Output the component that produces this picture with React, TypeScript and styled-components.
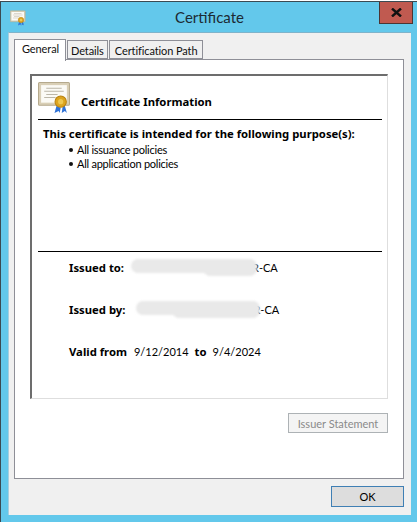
import React from "react";
import styled, { createGlobalStyle } from "styled-components";

const GlobalStyle = createGlobalStyle`
  html, body {
    margin: 0;
    padding: 0;
    background: #ffffff;
  }
  body {
    font-family: Lato, "Noto Sans", sans-serif;
    font-size: 11px;
    color: #000;
  }
`;

function CertIcon({ size }: { size: number }) {
  return (
    <svg width={size} height={size} viewBox="0 0 32 32">
      <rect x="0.5" y="1.5" width="30" height="22" rx="1" fill="#d9cfb6" stroke="#b5a98c" />
      <rect x="3" y="4" width="25" height="17" fill="#fbfaf5" />
      <path d="M8 7h15M6 10h19M8 13h11M6 16h11" stroke="#bcb7a8" strokeWidth="1" />
      <path d="M18 24l-2 7 4-2 1 2 1-5zM24 24l-1 7 3-2 2 2-2-7z" fill="#2f72d6" />
      <circle cx="22" cy="20" r="5.5" fill="#dca41e" stroke="#b9820f" />
      <circle cx="22" cy="20" r="2.5" fill="#efc850" />
    </svg>
  );
}

function App() {
  return (
    <Page>
      <GlobalStyle />
      <Window>
        <TitleBar>
          <TitleIcon>
            <CertIcon size={16} />
          </TitleIcon>
          <Title>Certificate</Title>
          <CloseButton aria-label="Close">
            <svg width="11" height="9" viewBox="0 0 11 9">
              <path d="M1 0.5l9 8M10 0.5l-9 8" stroke="#111" strokeWidth="2.4" />
            </svg>
          </CloseButton>
        </TitleBar>
        <Client>
          <Tabs>
            <Tab $active $left={7} $right={6}>General</Tab>
            <Tab $left={3} $right={3}>Details</Tab>
            <Tab $left={5} $right={5}>Certification Path</Tab>
          </Tabs>
          <TabPanel>
            <CertBox>
              <InfoHeader>
                <CertIcon size={33} />
                <InfoTitle>Certificate Information</InfoTitle>
              </InfoHeader>
              <Purpose>
                <PurposeTitle>This certificate is intended for the following purpose(s):</PurposeTitle>
                <PolicyList>
                  <li>All issuance policies</li>
                  <li>All application policies</li>
                </PolicyList>
              </Purpose>
              <Details>
                <DetailRow>
                  <Label>Issued to:</Label>
                  <Value>
                    <Blur $offset={1} $width={126} $gap={5} $lobeLeft={72} />
                    R-CA
                  </Value>
                </DetailRow>
                <DetailRow>
                  <Label>Issued by:</Label>
                  <Value>
                    <Blur $offset={5} $width={124} $gap={7} $lobeLeft={36} />
                    R-CA
                  </Value>
                </DetailRow>
                <DetailRow>
                  <Label>Valid from</Label>
                  <Dates>
                    <span>9/12/2014</span>
                    <Label>to</Label>
                    <span>9/4/2024</span>
                  </Dates>
                </DetailRow>
              </Details>
            </CertBox>
            <PanelActions>
              <IssuerButton disabled>Issuer Statement</IssuerButton>
            </PanelActions>
          </TabPanel>
          <Footer>
            <OkButton>OK</OkButton>
          </Footer>
        </Client>
      </Window>
    </Page>
  );
}
export default App;

const Page = styled.div`
  width: 417px;
  height: 522px;
  padding-top: 1px;
  box-sizing: border-box;
  overflow: hidden;
`;

const Window = styled.div`
  width: 417px;
  height: 521px;
  box-sizing: border-box;
  background: #63c8eb;
  border-top: 1px solid #3b4a52;
  border-left: 1px solid #3b4a52;
  padding: 0 6px 7px 7px;
  display: flex;
  flex-direction: column;
`;

const TitleBar = styled.div`
  height: 30px;
  position: relative;
  display: flex;
  align-items: center;
  justify-content: center;
  flex: none;
`;

const TitleIcon = styled.div`
  position: absolute;
  left: 2px;
  top: 8px;
  display: flex;
`;

const Title = styled.div`
  font-size: 15px;
  color: #1c2a33;
`;

const CloseButton = styled.button`
  position: absolute;
  right: -2px;
  top: 0;
  width: 34px;
  height: 22px;
  box-sizing: border-box;
  padding: 0;
  background: #c05a50;
  border: 1px solid #4c3533;
  border-top: none;
  display: flex;
  align-items: center;
  justify-content: center;
`;

const Client = styled.div`
  flex: 1;
  background: #f0f0f0;
  border-top: 1px solid #7fb3ca;
  border-left: 1px solid #a6cfe0;
  padding: 6px 7px 0 5px;
  display: flex;
  flex-direction: column;
  min-height: 0;
`;

const Tabs = styled.div`
  display: flex;
  align-items: flex-end;
  height: 22px;
  flex: none;
  position: relative;
  z-index: 1;
  margin-bottom: -2px;
`;

const Tab = styled.div<{ $active?: boolean; $left: number; $right: number }>`
  box-sizing: border-box;
  height: ${(p) => (p.$active ? "22px" : "19px")};
  margin-bottom: ${(p) => (p.$active ? "0" : "2px")};
  padding: ${(p) => (p.$active ? 0 : 1)}px ${(p) => p.$right}px 0 ${(p) => p.$left}px;
  background: ${(p) => (p.$active ? "#ffffff" : "#f0f0f0")};
  border: 1px solid #8e8f97;
  border-bottom: ${(p) => (p.$active ? "none" : "1px solid #8e8f97")};
  margin-left: ${(p) => (p.$active ? "0" : "1px")};
  font-size: 11px;
  letter-spacing: -0.1px;
  line-height: 17px;
  white-space: nowrap;
  color: #111;
`;

const TabPanel = styled.div`
  height: 420px;
  box-sizing: border-box;
  background: #ffffff;
  border: 1px solid #8e8f97;
  padding: 14px 15px 0 15px;
  flex: none;
  display: flex;
  flex-direction: column;
`;

const CertBox = styled.div`
  height: 325px;
  box-sizing: border-box;
  border-top: 2px solid #6d6d6d;
  border-left: 2px solid #6d6d6d;
  border-right: 1px solid #dedede;
  border-bottom: 1px solid #dedede;
  padding: 0 5px 0 6px;
  flex: none;
`;

const InfoHeader = styled.div`
  height: 44px;
  display: flex;
  align-items: center;
  gap: 10px;
  border-bottom: 1px solid #000;
  box-sizing: border-box;
`;

const InfoTitle = styled.div`
  font-family: "Noto Sans", sans-serif;
  font-weight: 700;
  font-size: 11.3px;
  padding-top: 8px;
`;

const Purpose = styled.div`
  height: 132px;
  box-sizing: border-box;
  border-bottom: 1px solid #000;
  padding: 5px 0 0 5px;
`;

const PurposeTitle = styled.div`
  font-family: "Noto Sans", sans-serif;
  font-weight: 700;
  font-size: 11.3px;
  line-height: 17px;
  white-space: nowrap;
`;

const PolicyList = styled.ul`
  margin: 1px 0 0;
  padding: 0 0 0 26px;
  list-style: none;
  line-height: 14px;
  font-size: 11px;
  letter-spacing: -0.25px;

  li {
    display: flex;
    align-items: center;
    gap: 4px;
  }

  li::before {
    content: "";
    width: 4px;
    height: 4px;
    border-radius: 50%;
    background: #111;
  }
`;

const Details = styled.div`
  padding: 7px 0 0 31px;
  display: flex;
  flex-direction: column;
  gap: 25px;
`;

const DetailRow = styled.div`
  height: 17px;
  display: flex;
  align-items: center;
  font-size: 11px;
  white-space: nowrap;
`;

const Label = styled.span`
  font-family: "Noto Sans", sans-serif;
  font-weight: 700;
  font-size: 11.3px;
`;

const Value = styled.span`
  display: flex;
  align-items: center;
  margin-left: 6px;
`;

const Blur = styled.span<{ $offset: number; $width: number; $gap: number; $lobeLeft: number }>`
  position: relative;
  top: -2px;
  z-index: 1;
  display: inline-block;
  width: ${(p) => p.$width}px;
  height: 14px;
  margin-left: ${(p) => p.$offset}px;
  margin-right: -${(p) => p.$gap}px;
  border-radius: 7px;
  background: #e9e9e9;
  filter: blur(1px);

  &::after {
    content: "";
    position: absolute;
    left: ${(p) => p.$lobeLeft}px;
    right: 0;
    top: 3px;
    height: 14px;
    border-radius: 7px;
    background: #e9e9e9;
  }
`;

const Dates = styled.span`
  display: flex;
  align-items: center;
  gap: 6px;
  margin-left: 7px;
`;

const PanelActions = styled.div`
  display: flex;
  justify-content: flex-end;
  padding: 14px 0 0;
`;

const IssuerButton = styled.button`
  width: 100px;
  height: 20px;
  box-sizing: border-box;
  padding: 0;
  background: #f4f4f4;
  border: 1px solid #adb2b5;
  font-family: inherit;
  font-size: 11px;
  color: #8a8a8a;
`;

const Footer = styled.div`
  display: flex;
  justify-content: flex-end;
  padding-top: 7px;
`;

const OkButton = styled.button`
  width: 73px;
  height: 21px;
  box-sizing: border-box;
  padding: 0;
  background: #dddddd;
  border: 1px solid #3f7fb4;
  font-family: inherit;
  font-size: 11px;
  color: #000;
`;
